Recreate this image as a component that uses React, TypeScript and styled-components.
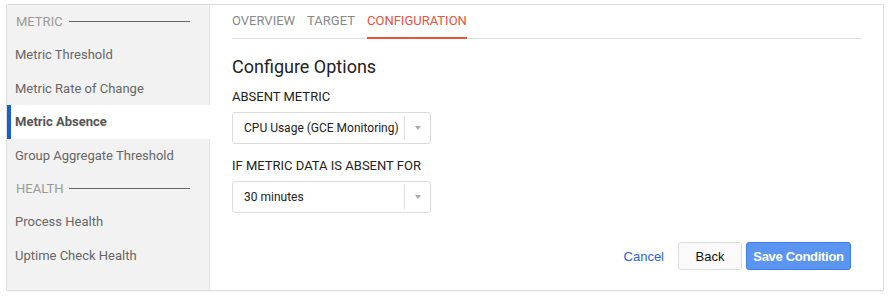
import React from "react";
import styled, { createGlobalStyle } from "styled-components";

const GlobalStyle = createGlobalStyle`
  body {
    margin: 0;
    background: #fff;
    font-family: Roboto, "Liberation Sans", Arial, sans-serif;
  }
`;

const Page = styled.div`
  padding: 4px 4px 5px 6px;
`;

const Card = styled.div`
  display: flex;
  height: 287px;
  border: 1px solid #dcdcdc;
  border-radius: 2px;
  box-sizing: border-box;
  box-shadow: 0 1px 1px rgba(0, 0, 0, 0.05);
`;

const Sidebar = styled.nav`
  width: 202px;
  flex-shrink: 0;
  background: #f2f2f2;
  border-right: 1px solid #e6e6e6;
`;

const SectionHeader = styled.div`
  display: flex;
  align-items: center;
  height: 33px;
  padding: 0 19px 0 9px;
  font-size: 13px;
  color: #999;
  &::after {
    content: "";
    flex: 1;
    height: 1px;
    background: #666;
    margin-left: 6px;
  }
`;

const NavItem = styled.div<{ $active?: boolean }>`
  height: 33.5px;
  display: flex;
  align-items: center;
  padding-left: ${(p) => (p.$active ? "4px" : "8px")};
  font-size: 13px;
  color: ${(p) => (p.$active ? "#555" : "#666")};
  font-weight: ${(p) => (p.$active ? 700 : 400)};
  background: ${(p) => (p.$active ? "#fff" : "transparent")};
  border-left: ${(p) => (p.$active ? "4px solid #1a5fd1" : "none")};
  margin-right: ${(p) => (p.$active ? "-1px" : "0")};
`;

const Main = styled.div`
  flex: 1;
  padding: 0 22px 0 22px;
  display: flex;
  flex-direction: column;
`;

const Tabs = styled.div`
  display: flex;
  gap: 12px;
  border-bottom: 1px solid #ddd;
  height: 33px;
`;

const Tab = styled.div<{ $active?: boolean }>`
  font-size: 13px;
  color: ${(p) => (p.$active ? "#e8533b" : "#888")};
  padding-top: 8px;
  box-sizing: border-box;
  border-bottom: ${(p) => (p.$active ? "2px solid #e8533b" : "none")};
  margin-bottom: -1px;
  height: 34px;
`;

const Title = styled.h2`
  margin: 17px 0 0;
  font-size: 18px;
  font-weight: 400;
  color: #222;
`;

const Label = styled.div<{ $gap?: number }>`
  font-size: 13px;
  color: #222;
  margin-top: ${(p) => p.$gap ?? 12}px;
  margin-bottom: 8px;
`;

const Select = styled.div`
  width: 199px;
  height: 32px;
  box-sizing: border-box;
  border: 1px solid #ddd;
  border-radius: 3px;
  display: flex;
  align-items: center;
  font-size: 12px;
  color: #222;
`;

const SelectValue = styled.span`
  flex: 1;
  padding-left: 11px;
`;

const SelectArrow = styled.span`
  width: 25px;
  height: 24px;
  border-left: 1px solid #ddd;
  display: flex;
  align-items: center;
  justify-content: center;
  &::after {
    content: "";
    border-left: 3px solid transparent;
    border-right: 3px solid transparent;
    border-top: 4px solid #aaa;
  }
`;

const Actions = styled.div`
  margin-top: auto;
  margin-bottom: 20px;
  display: flex;
  justify-content: flex-end;
  align-items: center;
  gap: 4px;
  padding-right: 10px;
  font-family: "Liberation Sans", Arial, sans-serif;
`;

const LinkButton = styled.span`
  color: #2b5fd9;
  font-size: 13px;
  margin-right: 10px;
`;

const Button = styled.button<{ $primary?: boolean }>`
  font-family: inherit;
  font-size: 13px;
  height: 28px;
  padding: 0;
  border-radius: 3px;
  border: 1px solid ${(p) => (p.$primary ? "#3b7ee9" : "#ddd")};
  background: ${(p) => (p.$primary ? "#5b95f1" : "#fafafa")};
  color: ${(p) => (p.$primary ? "#fff" : "#111")};
  font-weight: ${(p) => (p.$primary ? 700 : 400)};
  letter-spacing: ${(p) => (p.$primary ? "-0.3px" : "0")};
  width: ${(p) => (p.$primary ? "105px" : "64px")};
`;

export default function App() {
  return (
    <Page>
      <GlobalStyle />
      <Card>
        <Sidebar>
          <SectionHeader>METRIC</SectionHeader>
          <NavItem>Metric Threshold</NavItem>
          <NavItem>Metric Rate of Change</NavItem>
          <NavItem $active>Metric Absence</NavItem>
          <NavItem>Group Aggregate Threshold</NavItem>
          <SectionHeader>HEALTH</SectionHeader>
          <NavItem>Process Health</NavItem>
          <NavItem>Uptime Check Health</NavItem>
        </Sidebar>
        <Main>
          <Tabs>
            <Tab>OVERVIEW</Tab>
            <Tab>TARGET</Tab>
            <Tab $active>CONFIGURATION</Tab>
          </Tabs>
          <Title>Configure Options</Title>
          <Label>ABSENT METRIC</Label>
          <Select>
            <SelectValue>CPU Usage (GCE Monitoring)</SelectValue>
            <SelectArrow />
          </Select>
          <Label $gap={14}>IF METRIC DATA IS ABSENT FOR</Label>
          <Select>
            <SelectValue>30 minutes</SelectValue>
            <SelectArrow />
          </Select>
          <Actions>
            <LinkButton>Cancel</LinkButton>
            <Button>Back</Button>
            <Button $primary>Save Condition</Button>
          </Actions>
        </Main>
      </Card>
    </Page>
  );
}
